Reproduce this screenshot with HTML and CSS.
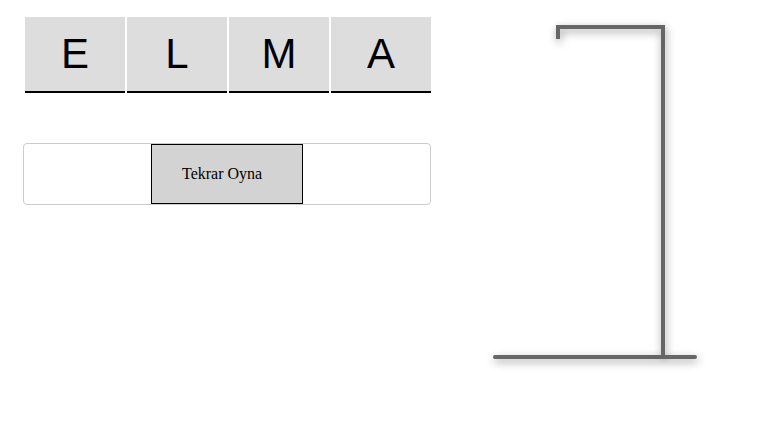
FILE: index.html
```html
<!DOCTYPE html>
<html>
<head>
<meta charset="utf-8">
<link rel="stylesheet" href="styles.css">
</head>
<body>
<div class="page">
  <div class="left">
    <div class="letters">
      <div class="letter">E</div>
      <div class="letter">L</div>
      <div class="letter">M</div>
      <div class="letter">A</div>
    </div>
    <div class="controls">
      <button class="again">Tekrar Oyna</button>
    </div>
  </div>
  <svg class="gallows" width="326" height="423" viewBox="0 0 326 423">
    <polyline points="108,22 108,10 213,10 213,340" fill="none" stroke="#666" stroke-width="4" stroke-linejoin="miter"/>
    <line x1="45" y1="340" x2="245" y2="340" stroke="#666" stroke-width="4" stroke-linecap="round"/>
  </svg>
</div>
</body>
</html>
```
FILE: styles.css
```css
html, body {
  margin: 0;
  padding: 0;
  background: #fff;
}
.page {
  display: flex;
  gap: 19px;
  padding: 17px 0 0 23px;
  font-family: "Liberation Serif", serif;
}
.left {
  width: 408px;
  display: flex;
  flex-direction: column;
}
.letters {
  display: flex;
  gap: 2px;
  margin-left: 2px;
}
.letter {
  width: 100px;
  height: 74px;
  background: #dddddd;
  border-bottom: 2px solid #000;
  display: flex;
  align-items: center;
  justify-content: center;
  font-family: "Liberation Sans", Arial, sans-serif;
  font-size: 42px;
  color: #000;
}
.controls {
  margin-top: 50px;
  height: 60px;
  border: 1px solid #ccc;
  border-radius: 4px;
  display: flex;
  justify-content: center;
}
.again {
  width: 152px;
  height: 60px;
  margin: 0;
  background: #d3d3d3;
  border: 1px solid #000;
  border-radius: 0;
  font-family: "Liberation Serif", serif;
  font-size: 16px;
  color: #000;
  text-align: left;
  padding: 0 0 0 30px;
}
.gallows {
  display: block;
  filter: drop-shadow(1px 3px 4px rgba(0, 0, 0, 0.4));
}
```
